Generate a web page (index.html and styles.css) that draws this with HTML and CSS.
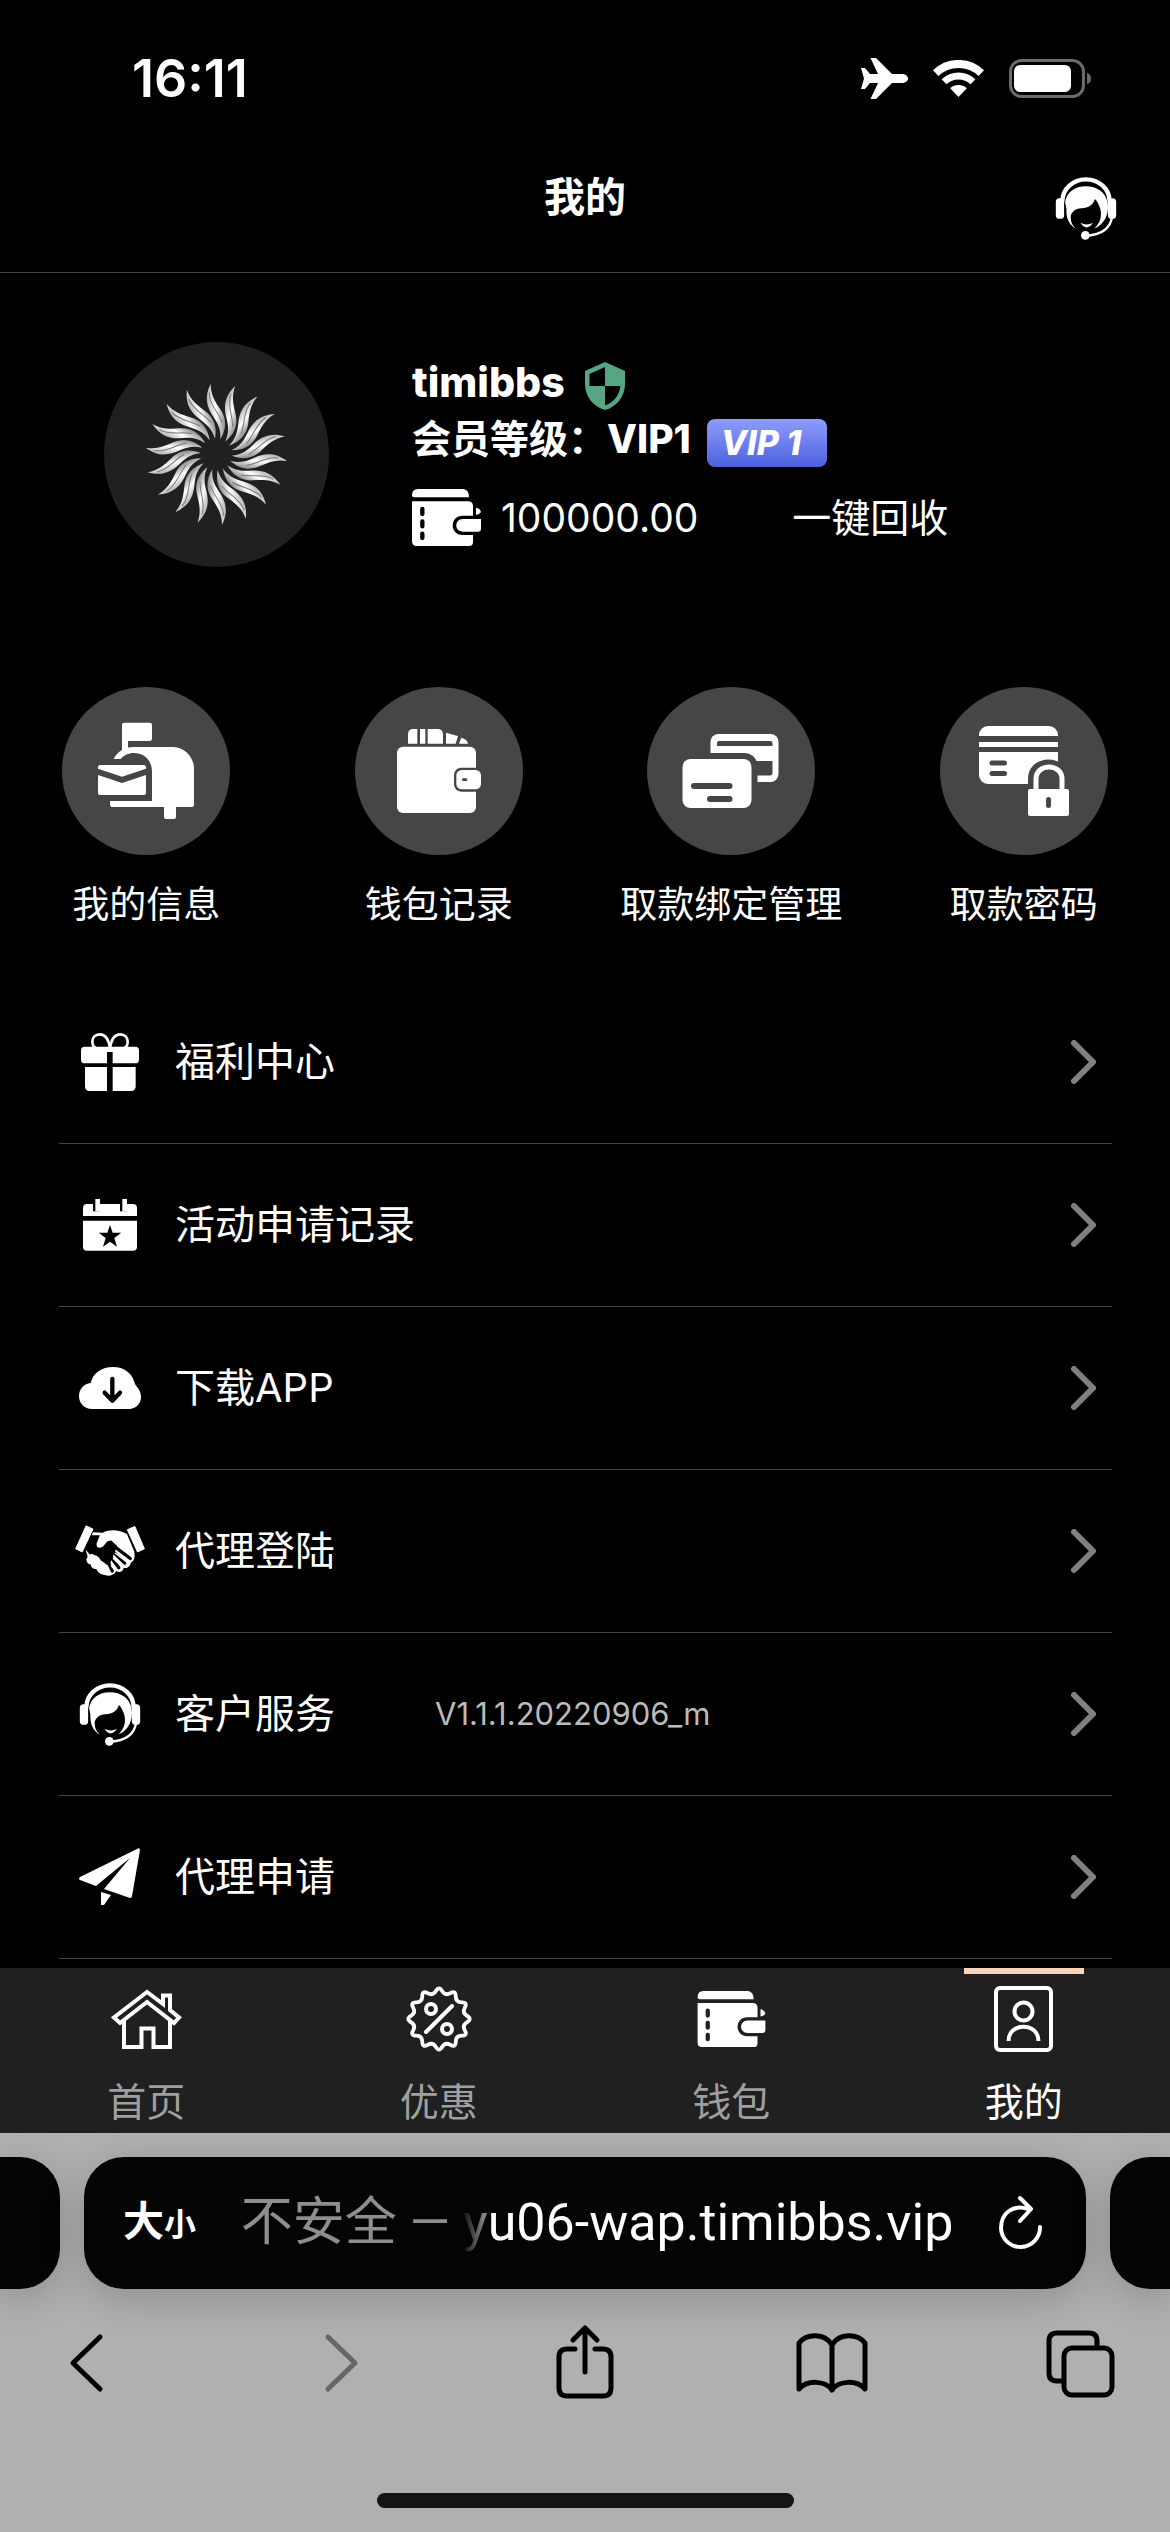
FILE: index.html
```html
<!DOCTYPE html>
<html lang="zh-CN">
<head>
    <meta charset="UTF-8">
    <meta name="viewport" content="width=device-width, initial-scale=1.0">
    <title>我的</title>
    <link rel="stylesheet" href="styles.css">
</head>
<body>
    <!-- Shared icons -->
    <svg class="sprite" aria-hidden="true">
        <symbol id="icon-wallet" viewBox="0 0 207 171">
            <path d="M0 19Q0 0 18 0H155Q171 3 171 25H6Q0 25 0 19Z"/>
            <path d="M0 37H168Q183 37 183 52V160Q183 171 171 171H14Q0 171 0 157Z"/>
            <path class="cut" d="M207 80H152C112 80 112 138 152 138H207Z"/>
            <path d="M207 90H153C126 90 126 128 153 128H198Q207 128 207 119Z"/>
            <path d="M192 56Q205 58 207 69Q203 77 192 78Z"/>
            <path class="cut-line" d="M31 60V75M31 97V112M31 134V147"/>
        </symbol>
        <symbol id="icon-service" viewBox="0 0 186 190">
            <path class="line" d="M22 72A71 65 0 0 1 164 72" stroke-width="13"/>
            <path d="M30 76C34 46 60 28 92 28C126 28 152 46 158 76C164 110 150 142 118 156C136 138 142 118 136 96Q130 76 120 66C112 92 92 92 72 95Q54 98 47 116C46 136 52 146 63 156C42 146 32 122 34 96Z"/>
            <rect x="2" y="64" width="25" height="62" rx="11"/>
            <rect x="159" y="64" width="25" height="62" rx="11"/>
            <path d="M76 138Q95 148 114 138Q95 166 76 138Z"/>
            <path class="line" d="M172 120C166 156 142 174 96 177" stroke-width="7"/>
            <circle cx="91" cy="176" r="13"/>
        </symbol>
        <symbol id="icon-arrow" viewBox="0 0 26 44">
            <path class="line" d="M4 3L23 22L4 41" stroke-width="6"/>
        </symbol>
    </svg>

    <div class="status-bar">
        <span class="time">16:11</span>
        <div class="status-icons">
            <svg width="47" height="41" viewBox="0 0 47 41"><path d="M9.500 0H15L31 16H41C45 16 47 18.500 47 20.500C47 22.500 45 25 41 25H31L15 41H9.500L17 25H9L4 31H0L3 20.500L0 10H4L9 16H17Z"/></svg>
            <svg width="51" height="38" viewBox="0 0 51 38">
                <path class="line" d="M2.700 13.100A33 33 0 0 1 48.300 13.100" stroke-width="8"/>
                <path class="line" d="M11 21.800A21 21 0 0 1 40 21.800" stroke-width="7"/>
                <path d="M25.500 37L17.200 28.300A12 12 0 0 1 33.800 28.300Z"/>
            </svg>
            <svg width="82" height="40" viewBox="0 0 82 40">
                <rect x="1.500" y="1.500" width="73" height="36" rx="11" fill="none" stroke="#6b6b6b" stroke-width="3"/>
                <rect x="5" y="6" width="57" height="27" rx="6"/>
                <path d="M78 14Q82 15 82 19.500Q82 24 78 25Z" fill="#6b6b6b"/>
            </svg>
        </div>
    </div>

    <header class="header">
        <h1>我的</h1>
        <button class="service-button" aria-label="客服"><svg width="62" height="63"><use href="#icon-service"/></svg></button>
    </header>

    <main>
        <section class="profile">
            <div class="avatar">
                <svg width="225" height="225" viewBox="-337 -337 675 675">
                    <defs>
                        <linearGradient id="metal" x1="0" y1="0" x2="1" y2="0">
                            <stop offset="0" stop-color="#b5b5b5"/>
                            <stop offset="0.5" stop-color="#ffffff"/>
                            <stop offset="1" stop-color="#8a8a8a"/>
                        </linearGradient>
                        <g id="ray">
                            <path fill="url(#metal)" d="M-17 -212C-38 -170 -28 -140 -7 -110C8 -88 14 -70 12 -45C30 -75 33 -105 12 -135C-5 -160 -17 -180 -17 -212Z"/>
                            <path fill="none" stroke="#777777" stroke-width="3" d="M-21 -185C-22 -150 8 -125 17 -95"/>
                        </g>
                    </defs>
                    <use href="#ray"/>
                    <use href="#ray" transform="rotate(20)"/>
                    <use href="#ray" transform="rotate(40)"/>
                    <use href="#ray" transform="rotate(60)"/>
                    <use href="#ray" transform="rotate(80)"/>
                    <use href="#ray" transform="rotate(100)"/>
                    <use href="#ray" transform="rotate(120)"/>
                    <use href="#ray" transform="rotate(140)"/>
                    <use href="#ray" transform="rotate(160)"/>
                    <use href="#ray" transform="rotate(180)"/>
                    <use href="#ray" transform="rotate(200)"/>
                    <use href="#ray" transform="rotate(220)"/>
                    <use href="#ray" transform="rotate(240)"/>
                    <use href="#ray" transform="rotate(260)"/>
                    <use href="#ray" transform="rotate(280)"/>
                    <use href="#ray" transform="rotate(300)"/>
                    <use href="#ray" transform="rotate(320)"/>
                    <use href="#ray" transform="rotate(340)"/>
                </svg>
            </div>
            <div class="info">
                <div class="info-row">
                    <strong class="name">timibbs</strong>
                    <svg width="40" height="48" viewBox="0 0 40 48">
                        <path fill="#56a583" d="M20 0L40 9V22C40 34 32 45 20 48C8 45 0 34 0 22V9Z"/>
                        <path class="cut" d="M20 5V24H4.500V12Z"/>
                        <path class="cut" d="M20 24H35.500C34 34 28 41 20 43.500Z"/>
                    </svg>
                </div>
                <div class="info-row level">
                    <span>会员等级：<strong>VIP1</strong></span>
                    <span class="vip-badge">VIP 1</span>
                </div>
                <div class="balance">
                    <svg width="69" height="57"><use href="#icon-wallet"/></svg>
                    <span>100000.00</span>
                    <button class="recover">一键回收</button>
                </div>
            </div>
        </section>

        <nav class="shortcuts">
            <a href="#">
                <svg class="round" viewBox="0 0 504 504">
                    <rect x="180" y="107" width="90" height="55" rx="7"/>
                    <path d="M180 113H198V190H180Z"/>
                    <path d="M155 216C165 195 185 180 215 180H330C370 180 396 212 396 245V354Q396 360 390 360H152Q144 360 144 350V342H270V255C270 218 245 198 215 198C200 198 185 205 176 216Z"/>
                    <rect x="306" y="340" width="36" height="56" rx="6"/>
                    <path d="M108 245V241Q108 234 115 234H245Q252 234 252 241V245L180 269Z"/>
                    <path d="M108 264L180 288L252 264V318Q252 324 246 324H114Q108 324 108 318Z"/>
                </svg>
                <span>我的信息</span>
            </a>
            <a href="#">
                <svg class="round" viewBox="0 0 504 504">
                    <rect x="126" y="179" width="237" height="199" rx="18"/>
                    <rect class="cut" x="297" y="242" width="90" height="72" rx="22"/>
                    <rect x="304" y="249" width="74" height="58" rx="16"/>
                    <rect class="cut" x="321" y="274" width="16" height="8" rx="4"/>
                    <path d="M159 170V142Q159 126 175 126H187V170ZM195 126H211V170H195ZM218 126H250Q264 128 264 142V170H218ZM273 137L309 147L302 170H273ZM312 170L319 152Q337 157 339 170Z"/>
                </svg>
                <span>钱包记录</span>
            </a>
            <a href="#">
                <svg class="round" viewBox="0 0 168 168">
                    <rect x="63.500" y="47" width="68" height="48" rx="8"/>
                    <path class="cut" d="M70 59V56Q70 54 72 54H123Q125.500 54 125.500 56V59ZM107 74H125.500V86Q125.500 88.500 123 88.500H107Z"/>
                    <rect class="cut" x="30" y="66" width="80.500" height="61" rx="13"/>
                    <rect x="35.500" y="72" width="69" height="49" rx="8"/>
                    <path class="cut-stroke" d="M47 99H82.500M63 112H82.500" stroke-width="6"/>
                </svg>
                <span>取款绑定管理</span>
            </a>
            <a href="#">
                <svg class="round" viewBox="0 0 168 168">
                    <rect x="39" y="39" width="79" height="58" rx="9"/>
                    <path class="cut" d="M39 49H118V55H39ZM39 60H118V65H39Z"/>
                    <path class="cut-stroke" d="M52 76H64.500M52 86.500H64.500" stroke-width="5"/>
                    <path class="cut" d="M88 104V92C88 66 129 66 129 92V104Z"/>
                    <path class="line" d="M96 104V92C96 76 122 76 122 92V104" stroke-width="5"/>
                    <rect x="88" y="102" width="41" height="27" rx="2"/>
                    <path class="cut-stroke" d="M108.500 112.500V118.500" stroke-width="5"/>
                </svg>
                <span>取款密码</span>
            </a>
        </nav>

        <ul class="menu">
            <li><a href="#">
                <span class="menu-icon"><svg width="58" height="58" viewBox="0 0 174 174">
                    <path class="line" d="M87 44C82 16 71 4 57 4C42 4 34 14 34 26C34 36 38 42 44 45M87 44C92 16 103 4 117 4C132 4 140 14 140 26C140 36 136 42 130 45" stroke-width="8"/>
                    <rect y="41" width="174" height="50" rx="11"/>
                    <path d="M12 102H164V160Q164 174 150 174H26Q12 174 12 160Z"/>
                    <path class="cut" d="M78 57H95V174H78Z"/>
                </svg></span>
                <span>福利中心</span>
                <svg class="arrow"><use href="#icon-arrow"/></svg>
            </a></li>
            <li><a href="#">
                <span class="menu-icon"><svg width="54" height="52" viewBox="0 0 162 156">
                    <path d="M0 51V27Q0 15 12 15H150Q162 15 162 27V51ZM0 65H162V143Q162 155 150 155H12Q0 155 0 143Z"/>
                    <path class="cut" d="M30 10H51V37H30ZM111 10H132V37H111ZM81 78L89 101H115L94 117L102 143L81 128L60 143L68 117L47 101H73Z"/>
                    <path d="M37 0H51V37H37ZM118 0H132V37H118Z"/>
                </svg></span>
                <span>活动申请记录</span>
                <svg class="arrow"><use href="#icon-arrow"/></svg>
            </a></li>
            <li><a href="#">
                <span class="menu-icon"><svg width="62" height="42" viewBox="0 0 186 126">
                    <path d="M40 126C15 126 0 108 0 87C0 66 16 50 35 48C42 18 68 0 102 0C135 0 158 18 166 45C168 58 186 65 186 90C186 110 170 126 150 126Z"/>
                    <path class="cut-stroke" d="M100 36V100M77 77L100 101L123 77" stroke-width="13"/>
                </svg></span>
                <span>下载APP</span>
                <svg class="arrow"><use href="#icon-arrow"/></svg>
            </a></li>
            <li><a href="#">
                <span class="menu-icon"><svg width="70" height="52" viewBox="43 48 214 158">
                    <path d="M98 70L128 71C150 60 180 62 202 76L224 128C228 150 222 160 214 162C212 175 200 182 192 178C190 190 178 195 170 188C160 203 145 205 135 200C120 200 112 190 108 182C95 182 90 172 92 168C78 168 74 150 82 145L76 124Z"/>
                    <path class="cut" d="M66 104L92 79H119L109 104Q108 124 128 114L142 97L154 95L172 112L150 165L141 170Q130 160 122 156Q115 142 104 140Q94 134 88 138L72 118Z"/>
                    <path class="cut-stroke" d="M154 106L212 150M150 120L195 164M146 136L177 178M142 156L157 188" stroke-width="10"/>
                    <path class="line" d="M166 134L206 164M160 150L188 177M154 172L166 186" stroke-width="4"/>
                    <path d="M77 50L98 60L65 130L45 120ZM203 62L226 52L255 120L234 130Z" stroke="#ffffff" stroke-width="3" stroke-linejoin="round"/>
                </svg></span>
                <span>代理登陆</span>
                <svg class="arrow"><use href="#icon-arrow"/></svg>
            </a></li>
            <li><a href="#">
                <span class="menu-icon"><svg width="62" height="63"><use href="#icon-service"/></svg></span>
                <span>客户服务</span>
                <span class="version">V1.1.1.20220906_m</span>
                <svg class="arrow"><use href="#icon-arrow"/></svg>
            </a></li>
            <li><a href="#">
                <span class="menu-icon"><svg width="62" height="58" viewBox="0 0 62 58">
                    <path d="M60 0L1 29Q-1 31 1 32L17 38L51 10L25 41L51 50Q53 50 53 48L61 2ZM22 44L32 47L25 57H22Z"/>
                </svg></span>
                <span>代理申请</span>
                <svg class="arrow"><use href="#icon-arrow"/></svg>
            </a></li>
        </ul>
    </main>

    <nav class="tab-bar">
        <a href="#">
            <span class="tab-icon"><svg width="71" height="61" viewBox="0 0 71 61">
                <path class="sharp" d="M36 3L3 28.500L9 34L36 13L63 34L68 28.500L59 21V6.500H52V15Z" stroke-width="4"/>
                <path class="sharp" d="M13 31V58H30.500V39.500H42.500V58H59V31" stroke-width="4"/>
            </svg></span>
            <span>首页</span>
        </a>
        <a href="#">
            <span class="tab-icon"><svg width="66" height="66" viewBox="-33 -33 66 66">
                <g class="line" stroke-width="4">
                    <g transform="scale(0.95)">
                        <path id="wave" d="M-3.200 -29.600Q0 -35 3.200 -29.600Q6.500 -24.100 12 -27.200Q17.500 -30.300 17.600 -24Q17.700 -17.700 24 -17.600Q30.300 -17.500 27.200 -12Q24.100 -6.500 29.600 -3.200"/>
                        <use href="#wave" transform="rotate(90)"/>
                        <use href="#wave" transform="rotate(180)"/>
                        <use href="#wave" transform="rotate(270)"/>
                    </g>
                    <circle cx="-8" cy="-10" r="5"/>
                    <circle cx="8" cy="10" r="5"/>
                    <path d="M13 -13L-13 13"/>
                </g>
            </svg></span>
            <span>优惠</span>
        </a>
        <a href="#">
            <span class="tab-icon"><svg width="69" height="56"><use href="#icon-wallet"/></svg></span>
            <span>钱包</span>
        </a>
        <a href="#" class="active">
            <span class="tab-icon"><svg width="59" height="66" viewBox="0 0 59 66">
                <g class="line" stroke-width="4">
                    <rect x="2" y="2" width="55" height="62" rx="4"/>
                    <circle cx="29.500" cy="25.500" r="9"/>
                    <path class="sharp" d="M14.500 55C14.500 36 44.500 36 44.500 55"/>
                </g>
            </svg></span>
            <span>我的</span>
        </a>
    </nav>

    <footer class="browser">
        <div class="address-row">
            <div class="side-tab left"></div>
            <div class="address-bar">
                <button class="text-size" aria-label="文字大小">大<small>小</small></button>
                <button class="url"><span class="insecure">不安全 — </span><span class="fade">y</span>u06-wap.timibbs.vip</button>
                <button class="reload" aria-label="刷新"><svg width="45" height="56" viewBox="0 0 45 56"><path class="line" d="M30 14C15 9 3 18 3 33A19.500 19.500 0 0 0 42 32M22 3L33 14L22 26" stroke-width="4"/></svg></button>
            </div>
            <div class="side-tab right"></div>
        </div>
        <div class="toolbar">
            <button aria-label="后退"><svg width="72" height="72" viewBox="0 0 72 72"><path d="M50 11L23 37L50 63"/></svg></button>
            <button aria-label="前进" disabled><svg width="72" height="72" viewBox="0 0 72 72"><path d="M29 11L56 37L29 63"/></svg></button>
            <button aria-label="分享"><svg width="72" height="72" viewBox="-10 0 72 72"><path d="M18 23H10Q2 23 2 31V62Q2 70 10 70H46Q54 70 54 62V31Q54 23 46 23H38M28 46V3M16 14L28 2L40 14"/></svg></button>
            <button aria-label="书签"><svg width="72" height="72" viewBox="0 -8 72 72"><path d="M36 11C29 -1 11 -1 3 9V55C11 46 29 46 36 56C43 46 61 46 69 55V9C61 -1 43 -1 36 11V56"/></svg></button>
            <button aria-label="标签页"><svg width="72" height="72" viewBox="-3 -5 72 72"><path d="M16 50H10Q2 50 2 42V10Q2 2 10 2H42Q50 2 50 10V16"/><rect x="17" y="17" width="48" height="47" rx="8"/></svg></button>
        </div>
        <div class="home-indicator"></div>
    </footer>
</body>
</html>
```

FILE: styles.css
```css
/* CSS Reset and Base Styles */
* {
    margin: 0;
    padding: 0;
    box-sizing: border-box;
}

body {
    min-height: 100vh;
    display: flex;
    flex-direction: column;
    background-color: #000;
    color: #fff;
    font-family: Inter, 'Noto Sans CJK SC', sans-serif;
    font-size: 39px;
    line-height: 40px;
}

a {
    color: inherit;
    text-decoration: none;
}

button {
    border: none;
    background: none;
    color: inherit;
    font: inherit;
    cursor: pointer;
}

/* Icons */
svg {
    display: block;
    flex-shrink: 0;
    fill: #fff;
}

.sprite {
    position: absolute;
    width: 0;
    height: 0;
}

.line {
    fill: none;
    stroke: #fff;
    stroke-linecap: round;
    stroke-linejoin: round;
}

.status-icons .line {
    stroke-linecap: butt;
}

.sharp {
    fill: none;
    stroke: #fff;
    stroke-linecap: butt;
    stroke-linejoin: miter;
}

.cut {
    fill: var(--cut, #000);
}

.cut-stroke {
    fill: none;
    stroke: var(--cut, #000);
    stroke-linecap: round;
    stroke-linejoin: round;
}

.cut-line {
    fill: none;
    stroke: var(--cut, #000);
    stroke-width: 13px;
    stroke-linecap: round;
}

/* Status bar */
.status-bar {
    display: flex;
    justify-content: space-between;
    align-items: center;
    height: 141px;
    padding: 16px 79px 0 132px;
}

.time {
    font-size: 52px;
    font-weight: 600;
}

.status-icons {
    display: flex;
    align-items: center;
    gap: 25px;
}

/* Header */
.header {
    display: grid;
    grid-template-columns: 1fr auto 1fr;
    align-items: start;
    height: 132px;
    padding: 36px 53px 0;
    border-bottom: 1px solid #444;
}

.header h1 {
    grid-column: 2;
    font-size: 41px;
    font-weight: 700;
}

.service-button {
    justify-self: end;
}

/* Profile */
main {
    flex: 1;
}

.profile {
    display: flex;
    gap: 83px;
    padding: 69px 104px 120px;
}

.avatar {
    width: 225px;
    height: 225px;
    border-radius: 50%;
    background-color: #202020;
    overflow: hidden;
}

.info {
    padding-top: 20px;
}

.info-row {
    display: flex;
    align-items: flex-start;
    gap: 20px;
    margin-bottom: 9px;
    font-weight: 700;
}

.info-row strong {
    font-weight: 800;
}

.name {
    font-size: 41px;
}

.level {
    gap: 16px;
    margin-bottom: 22px;
}

.vip-badge {
    width: 120px;
    padding-left: 14px;
    border-radius: 8px;
    background: linear-gradient(#8f9cfc, #4b62df);
    font-size: 34px;
    font-style: italic;
    font-weight: 800;
    line-height: 48px;
}

.balance {
    display: flex;
    align-items: center;
    gap: 20px;
}

.recover {
    margin-left: 74px;
}

/* Shortcut grid */
.shortcuts {
    display: grid;
    grid-template-columns: repeat(4, 1fr);
    font-size: 37px;
    line-height: 52px;
}

.shortcuts a {
    display: flex;
    flex-direction: column;
    align-items: center;
    gap: 24px;
    white-space: nowrap;
}

.round {
    --cut: #464646;
    width: 168px;
    height: 168px;
    border-radius: 50%;
    background-color: #464646;
}

/* Menu list */
.menu {
    list-style-type: none;
    padding: 50px 58px 9px 59px;
    font-size: 40px;
}

.menu a {
    display: flex;
    align-items: center;
    height: 163px;
    padding: 0 16px;
    border-bottom: 1px solid #444;
}

.menu-icon {
    display: flex;
    justify-content: center;
    width: 70px;
    margin-right: 30px;
}

.version {
    margin-left: 100px;
    color: #bbb;
    font-size: 31px;
}

.arrow {
    width: 26px;
    height: 44px;
    margin-left: auto;
}

.arrow .line,
#icon-arrow .line {
    stroke: #808080;
}

/* Bottom tabs */
.tab-bar {
    --cut: #202020;
    display: grid;
    grid-template-columns: repeat(4, 1fr);
    height: 165px;
    background-color: #202020;
    color: #9f9f9f;
}

.tab-bar a {
    position: relative;
    display: flex;
    flex-direction: column;
    align-items: center;
    padding-top: 18px;
    gap: 30px;
}

.tab-icon {
    display: flex;
    align-items: center;
    height: 66px;
}

.tab-bar .active {
    color: #fff;
}

.tab-bar .active::before {
    content: '';
    position: absolute;
    top: 0;
    width: 120px;
    height: 6px;
    background-color: #f6d5ba;
}

/* Browser controls */
.browser {
    height: 399px;
    padding-top: 24px;
    background-color: #b0b0b0;
    overflow: hidden;
}

.address-row {
    display: flex;
    gap: 24px;
    height: 132px;
}

.address-bar,
.side-tab {
    background-color: #040404;
    box-shadow: 0 9px 40px rgba(0, 0, 0, 0.2);
}

.side-tab {
    width: 60px;
}

.side-tab.left {
    border-radius: 0 40px 40px 0;
}

.side-tab.right {
    border-radius: 40px 0 0 40px;
}

.address-bar {
    flex: 1;
    display: flex;
    align-items: center;
    justify-content: space-between;
    padding: 0 43px 0 39px;
    border-radius: 40px;
}

.text-size {
    font-size: 41px;
    font-weight: 700;
}

.text-size small {
    font-size: 32px;
}

.url {
    font-family: Roboto, 'Noto Sans CJK SC', sans-serif;
    font-size: 52px;
    white-space: nowrap;
}

.insecure {
    color: #8e8e8e;
}

.fade {
    background: linear-gradient(to right, #111, #999);
    background-clip: text;
    -webkit-background-clip: text;
    color: transparent;
}

.toolbar {
    display: flex;
    justify-content: space-between;
    padding: 37px 54px 0 50px;
}

.toolbar svg {
    fill: none;
    stroke: #000;
    stroke-width: 5px;
    stroke-linecap: round;
    stroke-linejoin: round;
    overflow: visible;
}

.toolbar button:disabled svg {
    stroke: #666;
}

.home-indicator {
    width: 417px;
    height: 15px;
    margin: 95px auto 0;
    border-radius: 8px;
    background-color: #151515;
}
```
